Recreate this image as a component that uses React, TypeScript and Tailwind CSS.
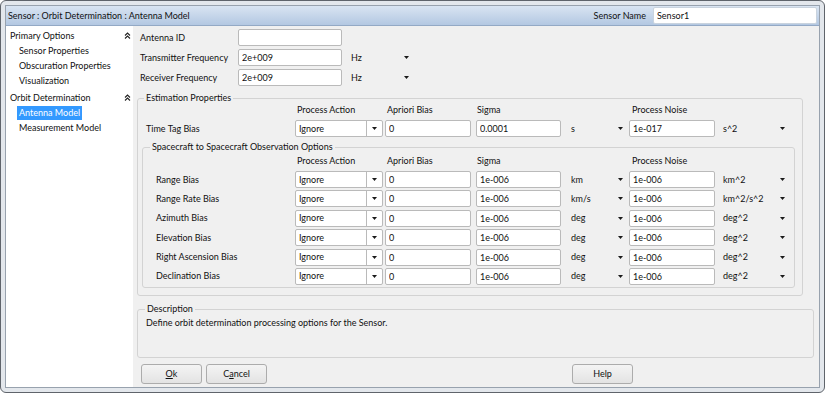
import React from 'react';

type Bias = {
    label: string;
    sigma: string;
    sigmaUnit: string;
    noise: string;
    noiseUnit: string;
};

const observationBiases: Bias[] = [
    { label: 'Range Bias', sigma: '1e-006', sigmaUnit: 'km', noise: '1e-006', noiseUnit: 'km^2' },
    { label: 'Range Rate Bias', sigma: '1e-006', sigmaUnit: 'km/s', noise: '1e-006', noiseUnit: 'km^2/s^2' },
    { label: 'Azimuth Bias', sigma: '1e-006', sigmaUnit: 'deg', noise: '1e-006', noiseUnit: 'deg^2' },
    { label: 'Elevation Bias', sigma: '1e-006', sigmaUnit: 'deg', noise: '1e-006', noiseUnit: 'deg^2' },
    { label: 'Right Ascension Bias', sigma: '1e-006', sigmaUnit: 'deg', noise: '1e-006', noiseUnit: 'deg^2' },
    { label: 'Declination Bias', sigma: '1e-006', sigmaUnit: 'deg', noise: '1e-006', noiseUnit: 'deg^2' },
];

function Arrow() {
    return (
        <svg width="5" height="3" viewBox="0 0 5 3" className="block">
            <path d="M0 0h5L2.5 3z" fill="#1a1a1a" />
        </svg>
    );
}

function Collapse() {
    return (
        <svg width="7" height="7" viewBox="0 0 7 7" className="block">
            <path
                d="M1 3.5L3.5 1L6 3.5M1 6.5L3.5 4L6 6.5"
                stroke="#222"
                strokeWidth="1.1"
                fill="none"
            />
        </svg>
    );
}

function TextBox({ value, className }: { value: string; className: string }) {
    return (
        <input
            readOnly
            value={value}
            className={`${className} h-[17px] bg-white border border-[#bababa] rounded-[2px] px-[3px] outline-none`}
        />
    );
}

function Combo() {
    return (
        <div className="w-[88px] h-[17px] bg-white border border-[#bababa] rounded-[2px] flex items-center">
            <span className="flex-1 pl-[3px]">Ignore</span>
            <span className="w-[16px] h-full border-l border-[#bababa] flex items-center justify-center">
                <Arrow />
            </span>
        </div>
    );
}

function ColumnHeaders({ labelW }: { labelW: string }) {
    return (
        <div className="flex h-[12px] items-center">
            <div className={labelW} />
            <div className="w-[88px] pl-[2px]">Process Action</div>
            <div className="ml-[2px] w-[86px] pl-[2px]">Apriori Bias</div>
            <div className="ml-[5px] w-[85px] pl-[1px]">Sigma</div>
            <div className="ml-[10px] w-[47px]" />
            <div className="w-[5px]" />
            <div className="ml-[6px] w-[86px] pl-[3px]">Process Noise</div>
        </div>
    );
}

function BiasRow({ bias, labelW }: { bias: Bias; labelW: string }) {
    return (
        <div className="flex h-[17px] items-center">
            <div className={labelW}>{bias.label}</div>
            <Combo />
            <TextBox value="0" className="ml-[2px] w-[86px]" />
            <TextBox value={bias.sigma} className="ml-[5px] w-[85px]" />
            <div className="ml-[10px] w-[47px]">{bias.sigmaUnit}</div>
            <Arrow />
            <TextBox value={bias.noise} className="ml-[6px] w-[86px]" />
            <div className="ml-[8px] w-[57px]">{bias.noiseUnit}</div>
            <Arrow />
        </div>
    );
}

function Button({ children, className }: { children: React.ReactNode; className?: string }) {
    return (
        <button
            className={`${className ?? ''} w-[61px] h-[20px] rounded-[3px] border border-[#acacac] bg-linear-to-b from-[#f4f4f4] to-[#e3e3e3] flex items-center justify-center`}
        >
            {children}
        </button>
    );
}

function Sidebar() {
    return (
        <div className="w-[127px] bg-white pt-[1px] leading-[15px]">
            <div className="h-[16px] flex items-center justify-between pl-[4px] pr-[2px]">
                <span>Primary Options</span>
                <Collapse />
            </div>
            <div className="h-[15px] pl-[13px]">Sensor Properties</div>
            <div className="h-[15px] pl-[13px]">Obscuration Properties</div>
            <div className="h-[15px] pl-[13px]">Visualization</div>
            <div className="mt-[1px] h-[16px] flex items-center justify-between pl-[4px] pr-[2px]">
                <span>Orbit Determination</span>
                <Collapse />
            </div>
            <div className="h-[15px] pl-[11px]">
                <span className="inline-block h-[14px] leading-[14px] bg-[#3399ff] text-white px-[2px]">
                    Antenna Model
                </span>
            </div>
            <div className="h-[15px] pl-[13px]">Measurement Model</div>
        </div>
    );
}

export default function App() {
    const timeTag: Bias = {
        label: 'Time Tag Bias',
        sigma: '0.0001',
        sigmaUnit: 's',
        noise: '1e-017',
        noiseUnit: 's^2',
    };

    return (
        <div className="w-[825px] h-[394px] bg-white font-[Lato,'Noto_Sans',sans-serif] text-[9px] leading-[12px] text-[#111]">
            <div className="w-[825px] h-[393px] rounded-[6px] border border-[#5f646b] bg-[#e3e7ec] p-[4px]">
                <div className="h-full border border-[#98a2ae] flex flex-col">
                    <div className="h-[20px] shrink-0 flex items-center bg-linear-to-b from-[#d9e4f2] to-[#b3c8e2] border-b border-[#93a9c5]">
                        <span className="pl-[2px] flex-1">Sensor : Orbit Determination : Antenna Model</span>
                        <span className="mr-[7px]">Sensor Name</span>
                        <TextBox value="Sensor1" className="w-[164px] mr-[2px] border-[#c9d3de]" />
                    </div>

                    <div className="flex-1 flex">
                        <Sidebar />

                        <div className="flex-1 bg-[#f0f0f0] pt-[3px]">
                            <div className="flex flex-col gap-[3px] pl-[7px]">
                                <div className="flex items-center h-[17px]">
                                    <div className="w-[98px]">Antenna ID</div>
                                    <TextBox value="" className="w-[104px]" />
                                </div>
                                <div className="flex items-center h-[17px]">
                                    <div className="w-[98px]">Transmitter Frequency</div>
                                    <TextBox value="2e+009" className="w-[104px]" />
                                    <div className="ml-[9px] w-[53px]">Hz</div>
                                    <Arrow />
                                </div>
                                <div className="flex items-center h-[17px]">
                                    <div className="w-[98px]">Receiver Frequency</div>
                                    <TextBox value="2e+009" className="w-[104px]" />
                                    <div className="ml-[9px] w-[53px]">Hz</div>
                                    <Arrow />
                                </div>
                            </div>

                            <fieldset className="mt-[6px] ml-[4px] w-[666px] h-[204px] border border-[#d3d3d3] rounded-[3px] px-0">
                                <legend className="ml-[6px] px-[2px] leading-[12px]">Estimation Properties</legend>
                                <div className="pl-[4px]">
                                    <div className="pl-[4px]">
                                        <ColumnHeaders labelW="w-[149px]" />
                                        <div className="mt-[4px]">
                                            <BiasRow bias={timeTag} labelW="w-[149px]" />
                                        </div>
                                    </div>

                                    <fieldset className="mt-[4px] w-[653px] border border-[#d3d3d3] rounded-[3px] px-0 pb-[2px]">
                                        <legend className="ml-[7px] px-[2px] leading-[12px]">
                                            Spacecraft to Spacecraft Observation Options
                                        </legend>
                                        <div className="pl-[13px]">
                                            <div className="mt-[2px]">
                                                <ColumnHeaders labelW="w-[139px]" />
                                            </div>
                                            <div className="mt-[4px] flex flex-col gap-[2.4px]">
                                                {observationBiases.map((b) => (
                                                    <BiasRow key={b.label} bias={b} labelW="w-[139px]" />
                                                ))}
                                            </div>
                                        </div>
                                    </fieldset>
                                </div>
                            </fieldset>

                            <fieldset className="mt-[7px] ml-[4px] w-[677px] h-[55px] border border-[#d3d3d3] rounded-[3px] px-0">
                                <legend className="ml-[7px] px-[2px] leading-[12px]">Description</legend>
                                <div className="mt-[2px] pl-[8px]">
                                    Define orbit determination processing options for the Sensor.
                                </div>
                            </fieldset>

                            <div className="mt-[6px] flex pl-[8px]">
                                <Button>
                                    <span className="underline">O</span>k
                                </Button>
                                <Button className="ml-[4px]">
                                    C<span className="underline">a</span>ncel
                                </Button>
                                <Button className="ml-[305px]">Help</Button>
                            </div>
                        </div>
                    </div>
                </div>
            </div>
        </div>
    );
}
